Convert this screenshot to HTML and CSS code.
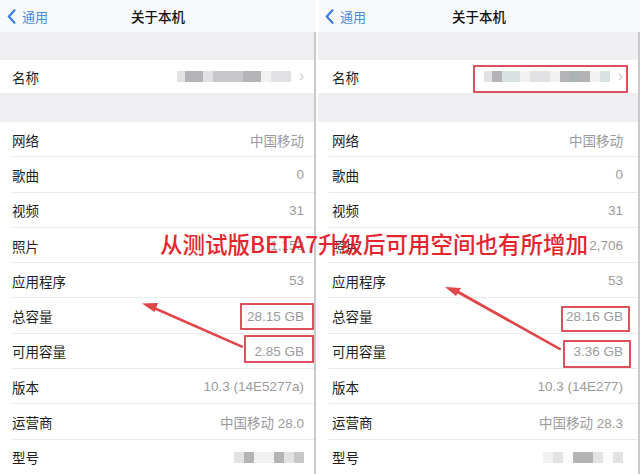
FILE: index.html
```html
<!DOCTYPE html>
<html lang="zh-CN">
<head>
<meta charset="utf-8">
<title>关于本机</title>
<link rel="stylesheet" href="styles.css">
</head>
<body>
<div class="stage">
  <section class="phone phone-left">
    <header class="nav">
      <span class="back"><svg class="chev" width="9" height="15" viewBox="0 0 9 15"><path d="M7.5 1.2 L1.8 7.5 L7.5 13.8" fill="none" stroke="#3a7fdc" stroke-width="2.2" stroke-linecap="round" stroke-linejoin="round"/></svg>通用</span>
      <span class="title">关于本机</span>
    </header>
    <div class="content">
      <div class="gap gap-top"></div>
      <div class="row row-name">
        <span class="label">名称</span>
        <span class="value">
          <span class="blur">
            <i class="b1 w8"></i><i class="b3 w18"></i><i class="b1 w10"></i><i class="b2 w30"></i><i class="b3 w18"></i><i class="b0 w10"></i><i class="b1 w20"></i>
          </span>
          <span class="arrow-r">›</span>
        </span>
      </div>
      <div class="gap gap-mid"></div>
      <div class="row"><span class="label">网络</span><span class="value">中国移动</span></div>
      <div class="row"><span class="label">歌曲</span><span class="value">0</span></div>
      <div class="row"><span class="label">视频</span><span class="value">31</span></div>
      <div class="row"><span class="label">照片</span><span class="value">1,153</span></div>
      <div class="row"><span class="label">应用程序</span><span class="value">53</span></div>
      <div class="row"><span class="label">总容量</span><span class="value">28.15 GB</span></div>
      <div class="row"><span class="label">可用容量</span><span class="value">2.85 GB</span></div>
      <div class="row"><span class="label">版本</span><span class="value">10.3 (14E5277a)</span></div>
      <div class="row"><span class="label">运营商</span><span class="value">中国移动 28.0</span></div>
      <div class="row"><span class="label">型号</span><span class="value">
        <span class="blur"><i class="b1 w10"></i><i class="b3 w10"></i><i class="b0 w20"></i><i class="b3 w10"></i><i class="b1 w10"></i><i class="b2 w10"></i></span>
      </span></div>
    </div>
  </section>

  <section class="phone phone-right">
    <header class="nav">
      <span class="back"><svg class="chev" width="9" height="15" viewBox="0 0 9 15"><path d="M7.5 1.2 L1.8 7.5 L7.5 13.8" fill="none" stroke="#3a7fdc" stroke-width="2.2" stroke-linecap="round" stroke-linejoin="round"/></svg>通用</span>
      <span class="title">关于本机</span>
    </header>
    <div class="content">
      <div class="gap gap-top"></div>
      <div class="row row-name">
        <span class="label">名称</span>
        <span class="value">
          <span class="blur">
            <i class="b1 w8"></i><i class="b3 w10"></i><i class="t1 w18"></i><i class="b0 w10"></i><i class="b1 w20"></i><i class="b0 w10"></i><i class="b3 w10"></i><i class="t2 w10"></i><i class="b3 w10"></i><i class="b0 w10"></i><i class="t1 w10"></i>
          </span>
          <span class="arrow-r">›</span>
        </span>
      </div>
      <div class="gap gap-mid"></div>
      <div class="row"><span class="label">网络</span><span class="value">中国移动</span></div>
      <div class="row"><span class="label">歌曲</span><span class="value">0</span></div>
      <div class="row"><span class="label">视频</span><span class="value">31</span></div>
      <div class="row"><span class="label">照片</span><span class="value">2,706</span></div>
      <div class="row"><span class="label">应用程序</span><span class="value">53</span></div>
      <div class="row"><span class="label">总容量</span><span class="value">28.16 GB</span></div>
      <div class="row"><span class="label">可用容量</span><span class="value">3.36 GB</span></div>
      <div class="row"><span class="label">版本</span><span class="value">10.3 (14E277)</span></div>
      <div class="row"><span class="label">运营商</span><span class="value">中国移动 28.3</span></div>
      <div class="row"><span class="label">型号</span><span class="value">
        <span class="blur"><i class="b0 w10"></i><i class="b1 w10"></i><i class="bx w10"></i><i class="b3 w20"></i><i class="b1 w10"></i><i class="bx w10"></i><i class="b1 w10"></i></span>
      </span></div>
    </div>
  </section>

  <div class="annot">
    <svg class="marks" width="640" height="474" viewBox="0 0 640 474">
      <g fill="none" stroke="#d8404c" stroke-width="1.8">
        <rect x="241" y="304" width="72" height="25"/>
        <rect x="245" y="336" width="68" height="26"/>
        <rect x="474" y="66" width="153" height="26"/>
        <rect x="562" y="307" width="67" height="24"/>
        <rect x="564" y="341" width="66" height="26"/>
      </g>
      <g fill="#e04548" stroke="none">
        <polygon points="242,348 153,309 154,306.5 243.5,346"/>
        <polygon points="142,303.5 158,303 154.5,312"/>
        <polygon points="560,350.5 455,292 456.5,289.5 561.5,348.5"/>
        <polygon points="445,287 461,288 456,296"/>
      </g>
    </svg>
    <div class="banner">从测试版BETA7升级后可用空间也有所增加</div>
  </div>
</div>
</body>
</html>
```

FILE: styles.css
```css
* { box-sizing: border-box; margin: 0; padding: 0; }

html, body {
  width: 640px;
  height: 474px;
  overflow: hidden;
  background: #ffffff;
}

body {
  font-family: "Noto Sans CJK SC", "Liberation Sans", sans-serif;
  color: #1c1c1c;
}

.stage {
  position: relative;
  width: 640px;
  height: 474px;
  display: flex;
  gap: 2px;
}

.phone {
  display: flex;
  flex-direction: column;
  height: 474px;
  overflow: hidden;
}

.phone-left { width: 316px; }
.phone-right { width: 322px; }

.nav {
  position: relative;
  height: 32px;
  flex: none;
  background: #f8f9fa;
  display: flex;
  align-items: center;
}

.back {
  display: flex;
  align-items: center;
  gap: 6px;
  color: #4a8ce0;
  font-size: 13px;
  padding-left: 7px;
  line-height: 1;
}

.chev { display: block; }

.title {
  position: absolute;
  left: 0;
  right: 0;
  text-align: center;
  font-size: 13.5px;
  font-weight: 500;
  color: #111;
  line-height: 32px;
}

.content {
  flex: 1;
  display: flex;
  flex-direction: column;
  border-right: 2px solid #c9c9cc;
  background: #ffffff;
}

.gap { background: #efeff2; flex: none; }
.gap-top { height: 28px; }
.gap-mid { height: 29px; }

.row {
  flex: none;
  height: 35.3px;
  display: flex;
  align-items: center;
  justify-content: space-between;
  padding: 0 10px 0 12px;
  background: #fff;
  position: relative;
}

.row::after {
  content: "";
  position: absolute;
  left: 11px;
  right: 0;
  bottom: 0;
  height: 1px;
  background: #ebebed;
}

.phone-right .row { padding: 0 15px 0 14px; }

.row-name { height: 33px; }
.row-name::after { display: none; }

.label {
  font-size: 13.5px;
  color: #1d1d1d;
}

.value {
  font-family: "Liberation Sans", "Noto Sans CJK SC", sans-serif;
  font-size: 13.5px;
  color: #9b9b9e;
  display: flex;
  align-items: center;
}

.row-name .value { gap: 8px; }

.arrow-r {
  font-size: 16px;
  color: #cfcfd2;
  line-height: 1;
  margin-top: -2px;
}

.blur {
  display: flex;
  height: 11px;
}

.blur i { display: block; height: 11px; }

.b0 { background: #f1f1f2; }
.b1 { background: #e2e2e4; }
.b2 { background: #c7c7c9; }
.b3 { background: #b4b4b6; }
.bx { background: #fbfbfb; }
.t1 { background: #d9e1e1; }
.t2 { background: #a9b3b1; }

.w8 { width: 8px; }
.w10 { width: 10px; }
.w18 { width: 18px; }
.w20 { width: 20px; }
.w30 { width: 30px; }

.annot {
  position: absolute;
  left: 0;
  top: 0;
  width: 640px;
  height: 474px;
  pointer-events: none;
}

.marks {
  position: absolute;
  left: 0;
  top: 0;
}

.banner {
  position: absolute;
  left: 160px;
  top: 230px;
  font-family: "Noto Sans CJK SC", sans-serif;
  font-size: 22.5px;
  font-weight: 500;
  line-height: 26px;
  color: #e3262e;
  white-space: nowrap;
}
```
